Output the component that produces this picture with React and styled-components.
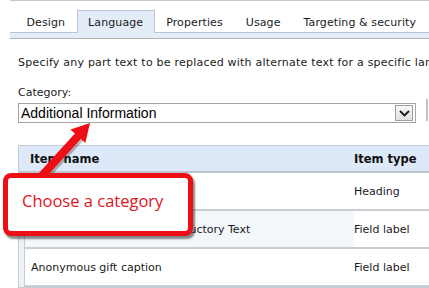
import styled, { createGlobalStyle } from "styled-components"

const GLOBAL = createGlobalStyle`
    html, body {
        margin: 0;
        padding: 0;
        background: #FFFFFF;
    }
    body {
        width: 429px;
        height: 288px;
        overflow: hidden;
        font-family: 'DejaVu Sans', Verdana, sans-serif;
        color: #1A1A1A;
    }
`

const TABS = ["Design", "Language", "Properties", "Usage", "Targeting & security"]

const ROWS = [
    { name: "Additional Information", type: "Heading" },
    { name: "Additional Information Introductory Text", type: "Field label", alt: true },
    { name: "Anonymous gift caption", type: "Field label" },
]

function App() {
    return (
        <PAGE>
            <GLOBAL />
            <TAB_BAR>
                <div className="tabs__row">
                    {TABS.map((tab) => (
                        <TAB key={tab} $active={tab === "Language"}>{tab}</TAB>
                    ))}
                </div>
                <div className="tabs__band" />
            </TAB_BAR>

            <CONTENT>
                <p className="content__intro">
                    Specify any part text to be replaced with alternate text for a specific language.
                </p>

                <label className="content__label">Category:</label>
                <SELECT_ROW>
                    <SELECT>
                        <span>Additional Information</span>
                        <div className="select__button">
                            <svg width="11" height="7" viewBox="0 0 11 7">
                                <path d="M1 1 L5.5 5.5 L10 1" fill="none" stroke="#1A1A1A" strokeWidth="1.8" />
                            </svg>
                        </div>
                    </SELECT>
                    <div className="select__edge" />
                </SELECT_ROW>

                <TABLE>
                    <HEADER>
                        <span className="cell__name">Item name</span>
                        <span className="cell__type">Item type</span>
                    </HEADER>
                    <div className="table__body">
                        {ROWS.map((row) => (
                            <ROW key={row.name} $alt={row.alt}>
                                <span className="cell__name">{row.name}</span>
                                <span className="cell__type">{row.type}</span>
                            </ROW>
                        ))}
                    </div>
                </TABLE>
            </CONTENT>

            {/* pointer from the callout up to the category box */}
            <ARROW width="120" height="90" viewBox="0 0 120 90">
                <g transform="translate(2 2)" opacity="0.3">
                    <line x1="38" y1="80" x2="79" y2="35" stroke="#222222" strokeWidth="8" />
                </g>
                <line x1="38" y1="80" x2="79" y2="35" stroke="#EE0F16" strokeWidth="8" />
                <polygon points="90,23 70.5,29.6 85.3,43" fill="#EE0F16" />
            </ARROW>

            <CALLOUT>Choose a category</CALLOUT>
        </PAGE>
    )
}

export default App

const PAGE = styled.div`
    position: relative;
    width: 429px;
    height: 288px;
    overflow: hidden;
`

const TAB_BAR = styled.div`
    margin-left: 10px;
    border-top: 1px solid #C9C9C9;

    .tabs__row {
        display: flex;
        align-items: flex-end;
        height: 32px;
        padding-left: 5px;
    }

    .tabs__band {
        height: 5px;
        background: #E4ECF7;
        border-top: 1px solid #B9C6D8;
        border-bottom: 1px solid #B5B5B5;
        margin-top: -1px;
    }
`

const TAB = styled.div`
    position: relative;
    z-index: 1;
    height: 22px;
    padding: 0 10.5px;
    font-size: 11px;
    line-height: 23px;
    letter-spacing: 0.1px;
    color: #1A1A1A;
    background: ${(p) => (p.$active ? "#E4ECF7" : "transparent")};
    border: 1px solid ${(p) => (p.$active ? "#B9C6D8" : "transparent")};
    border-bottom: none;
`

const CONTENT = styled.div`
    padding: 0 0 0 18px;

    .content__intro {
        margin: 17px 0 0;
        font-size: 11px;
        line-height: 14px;
        letter-spacing: 0.22px;
        white-space: nowrap;
    }

    .content__label {
        display: block;
        margin-top: 16px;
        font-size: 11px;
        line-height: 14px;
    }
`

const SELECT_ROW = styled.div`
    display: flex;
    align-items: flex-start;
    margin-top: 3px;

    .select__edge {
        width: 2px;
        height: 22px;
        margin-left: 10px;
        margin-top: -4px;
        background: #C4C4C4;
    }
`

const SELECT = styled.div`
    display: flex;
    align-items: center;
    justify-content: space-between;
    box-sizing: border-box;
    width: 398px;
    height: 20px;
    border: 1px solid #A5A5A5;
    background: #FFFFFF;

    span {
        padding-left: 2px;
        font-family: 'Liberation Sans', Arial, sans-serif;
        font-size: 14px;
        color: #000000;
    }

    .select__button {
        display: flex;
        align-items: center;
        justify-content: center;
        box-sizing: border-box;
        width: 18px;
        height: 16px;
        margin-right: 2px;
        border: 1px solid #A0A0A0;
        background: linear-gradient(#F6F6F6, #E2E2E2);
    }
`

const TABLE = styled.div`
    margin-top: 22px;
    border: 1px solid #C4CCD6;
    border-right: none;
    background: #EEF1F6;
    padding-left: 5px;

    .cell__name {
        flex: 1;
        white-space: nowrap;
        overflow: hidden;
    }

    .cell__type {
        width: 75px;
        white-space: nowrap;
    }
`

const HEADER = styled.div`
    display: flex;
    align-items: center;
    height: 25px;
    margin-left: -5px;
    padding-left: 11px;
    background: #DDE8F8;
    border-bottom: 2px solid #BCC4CE;
    font-weight: bold;
    font-size: 11.5px;
    color: #111111;
`

const ROW = styled.div`
    display: flex;
    align-items: center;
    height: 36px;
    padding-left: 6px;
    background: ${(p) => (p.$alt ? "#F3F6FB" : "#FFFFFF")};
    border-left: 1px solid #C8CDD4;
    border-bottom: 2px solid #C9CED5;
    font-size: 11px;
    color: #1A1A1A;

    .cell__type {
        align-self: stretch;
        display: flex;
        align-items: center;
        background: #FFFFFF;
    }
`

const ARROW = styled.svg`
    position: absolute;
    left: 0;
    top: 100px;
    overflow: visible;
`

const CALLOUT = styled.div`
    position: absolute;
    left: 3px;
    top: 173px;
    box-sizing: border-box;
    width: 190px;
    height: 63px;
    padding: 11px 0 0 14px;
    background: #FFFFFF;
    border: 5px solid #EE0F16;
    border-radius: 8px;
    box-shadow: 2px 3px 2px rgba(40, 40, 40, 0.55);
    font-family: 'Open Sans', 'Noto Sans', sans-serif;
    font-size: 16.5px;
    color: #E2141C;
`
